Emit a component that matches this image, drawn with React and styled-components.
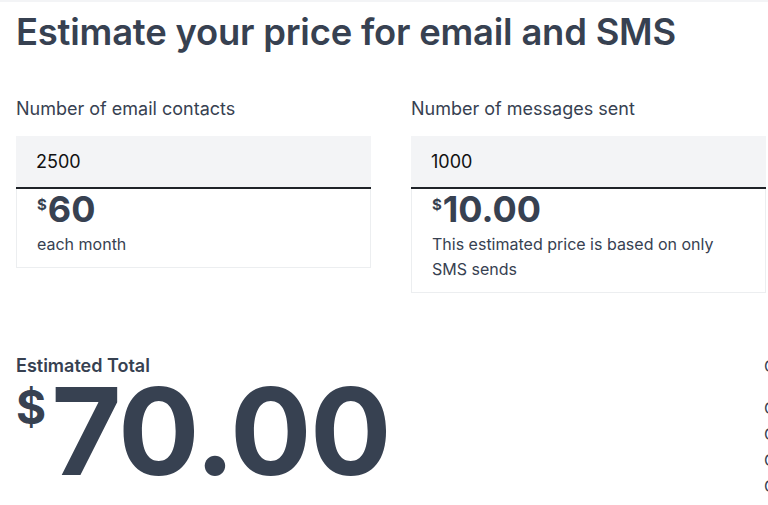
import React from "react";
import styled, { createGlobalStyle } from "styled-components";

const GlobalStyle = createGlobalStyle`
  html, body {
    margin: 0;
    padding: 0;
    background: #ffffff;
    overflow: hidden;
  }
  body {
    font-family: Inter, "Noto Sans", "Liberation Sans", sans-serif;
    color: #374151;
  }
`;

const Page = styled.div`
  width: 1100px;
  padding: 9px 0 0 16px;
  border-top: 2px solid #f3f4f6;
  box-sizing: border-box;
`;

const Title = styled.h1`
  margin: 0;
  font-size: 36.4px;
  line-height: 43px;
  font-weight: 600;
  color: #374151;
  letter-spacing: -0.2px;
`;

const Columns = styled.div`
  display: flex;
  gap: 40px;
  margin-top: 43px;
  align-items: flex-start;
`;

const Field = styled.div`
  width: 355px;
  display: flex;
  flex-direction: column;
`;

const Label = styled.label`
  font-size: 18px;
  line-height: 24px;
  color: #374151;
  margin-bottom: 15px;
`;

const Input = styled.div`
  height: 51px;
  background: #f3f4f6;
  border-bottom: 2px solid #1f2328;
  padding: 0 20px;
  display: flex;
  align-items: center;
  font-size: 18px;
  color: #111111;
`;

const Card = styled.div`
  border: 1px solid #eceef0;
  border-top: none;
  padding: 2px 20px 10px;
`;

const Price = styled.div`
  display: flex;
  align-items: flex-start;
  font-weight: 700;
  color: #374151;
  line-height: ${(p) => p.lh || 1};
`;

const Dollar = styled.span`
  font-size: ${(p) => p.size}px;
  margin-top: ${(p) => p.offset}px;
  margin-right: ${(p) => p.gap}px;
`;

const Amount = styled.span`
  font-size: ${(p) => p.size}px;
  letter-spacing: ${(p) => p.track}px;
`;

const Note = styled.p`
  margin: 5px 0 0;
  font-size: 16px;
  line-height: 25px;
  color: #374151;
`;

const Bottom = styled.div`
  display: grid;
  grid-template-columns: 748px auto;
  margin-top: 62px;
`;

const Total = styled.div`
  display: flex;
  flex-direction: column;
`;

const TotalLabel = styled.div`
  font-size: 18px;
  line-height: 22px;
  font-weight: 600;
  color: #374151;
`;

const Side = styled.ul`
  list-style: none;
  margin: -2px 0 0;
  padding: 0;
  font-size: 16px;
  color: #374151;
`;

const SideItem = styled.li`
  line-height: 26px;
  margin-top: ${(p) => p.top || 0}px;
`;

export default function App() {
  return (
    <>
      <GlobalStyle />
      <Page>
        <Title>Estimate your price for email and SMS</Title>
        <Columns>
          <Field>
            <Label>Number of email contacts</Label>
            <Input>2500</Input>
            <Card>
              <Price>
                <Dollar size={15} offset={6} gap={1}>$</Dollar>
                <Amount size={36} track={0}>60</Amount>
              </Price>
              <Note>each month</Note>
            </Card>
          </Field>
          <Field>
            <Label>Number of messages sent</Label>
            <Input>1000</Input>
            <Card>
              <Price>
                <Dollar size={15} offset={6} gap={1}>$</Dollar>
                <Amount size={36} track={0}>10.00</Amount>
              </Price>
              <Note>This estimated price is based on only SMS sends</Note>
            </Card>
          </Field>
        </Columns>
        <Bottom>
          <Total>
            <TotalLabel>Estimated Total</TotalLabel>
            <Price lh={0.9}>
              <Dollar size={46} offset={10} gap={5}>$</Dollar>
              <Amount size={121} track={-1.5}>70.00</Amount>
            </Price>
          </Total>
          <Side>
            <SideItem>Compare plans</SideItem>
            <SideItem top={16}>Custom email templates</SideItem>
            <SideItem>Campaign reporting</SideItem>
            <SideItem>Contact segmentation</SideItem>
            <SideItem>Customer support</SideItem>
          </Side>
        </Bottom>
      </Page>
    </>
  );
}
